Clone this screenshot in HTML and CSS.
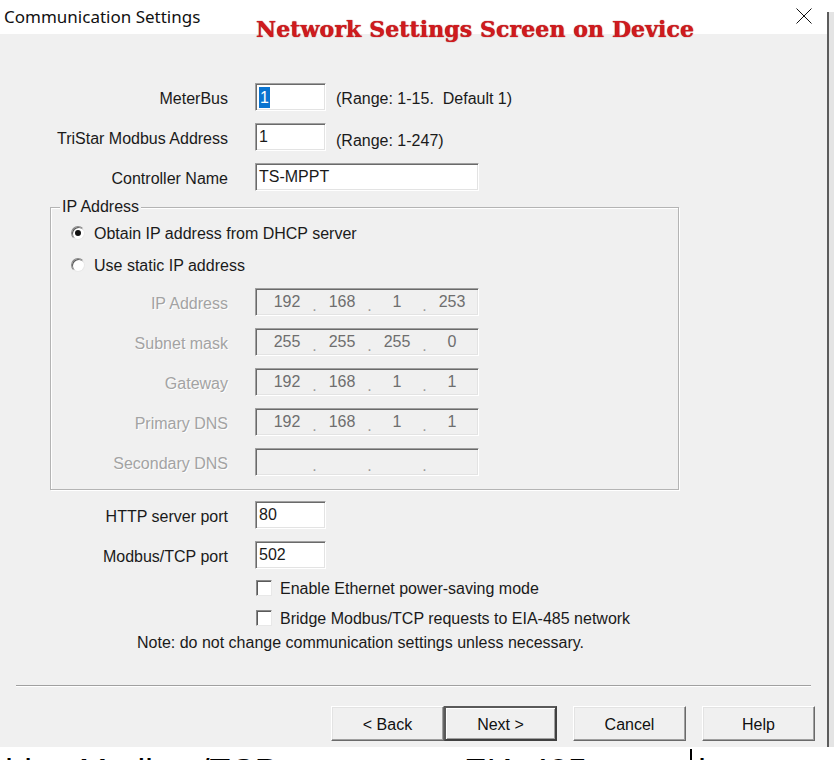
FILE: index.html
```html
<!DOCTYPE html>
<html lang="en">
<head>
  <meta charset="UTF-8" />
  <title>Communication Settings</title>
  <link rel="stylesheet" href="styles.css">
</head>
<body>
  <div class="screen">
    <div class="window">
      <div class="titlebar">
        <span class="title">Communication Settings</span>
        <svg class="close" width="16" height="16" viewBox="0 0 16 16">
          <path d="M0.5 0.5 L15.5 15.5 M15.5 0.5 L0.5 15.5" stroke="#111" stroke-width="1" fill="none" />
        </svg>
      </div>
      <div class="note-overlay">Network Settings Screen on Device</div>

      <div class="content">
        <div class="row">
          <span class="lbl">MeterBus</span>
          <div class="field short"><span class="selected">1</span></div>
          <span class="hint">(Range: 1-15.&nbsp; Default 1)</span>
        </div>
        <div class="row">
          <span class="lbl">TriStar Modbus Address</span>
          <div class="field short">1</div>
          <span class="hint low">(Range: 1-247)</span>
        </div>
        <div class="row">
          <span class="lbl">Controller Name</span>
          <div class="field long">TS-MPPT</div>
        </div>

        <div class="group">
          <span class="legend">IP Address</span>
          <div class="radio-row">
            <span class="radio checked"></span>
            <span>Obtain IP address from DHCP server</span>
          </div>
          <div class="radio-row">
            <span class="radio"></span>
            <span>Use static IP address</span>
          </div>

          <div class="row ip-row first">
            <span class="lbl disabled">IP Address</span>
            <div class="field long ip">
              <span class="oct">192</span><span class="dot">.</span><span class="oct">168</span><span class="dot">.</span><span class="oct">1</span><span class="dot">.</span><span class="oct">253</span>
            </div>
          </div>
          <div class="row ip-row">
            <span class="lbl disabled">Subnet mask</span>
            <div class="field long ip">
              <span class="oct">255</span><span class="dot">.</span><span class="oct">255</span><span class="dot">.</span><span class="oct">255</span><span class="dot">.</span><span class="oct">0</span>
            </div>
          </div>
          <div class="row ip-row">
            <span class="lbl disabled">Gateway</span>
            <div class="field long ip">
              <span class="oct">192</span><span class="dot">.</span><span class="oct">168</span><span class="dot">.</span><span class="oct">1</span><span class="dot">.</span><span class="oct">1</span>
            </div>
          </div>
          <div class="row ip-row">
            <span class="lbl disabled">Primary DNS</span>
            <div class="field long ip">
              <span class="oct">192</span><span class="dot">.</span><span class="oct">168</span><span class="dot">.</span><span class="oct">1</span><span class="dot">.</span><span class="oct">1</span>
            </div>
          </div>
          <div class="row ip-row">
            <span class="lbl disabled">Secondary DNS</span>
            <div class="field long ip">
              <span class="oct"></span><span class="dot">.</span><span class="oct"></span><span class="dot">.</span><span class="oct"></span><span class="dot">.</span><span class="oct"></span>
            </div>
          </div>
        </div>

        <div class="row port-row">
          <span class="lbl">HTTP server port</span>
          <div class="field short">80</div>
        </div>
        <div class="row">
          <span class="lbl">Modbus/TCP port</span>
          <div class="field short">502</div>
        </div>

        <div class="check-row first">
          <span class="checkbox"></span>
          <span>Enable Ethernet power-saving mode</span>
        </div>
        <div class="check-row">
          <span class="checkbox"></span>
          <span>Bridge Modbus/TCP requests to EIA-485 network</span>
        </div>
        <p class="note">Note: do not change communication settings unless necessary.</p>

        <div class="separator"></div>

        <div class="buttons">
          <button class="btn">&lt; Back</button>
          <button class="btn default">Next &gt;</button>
          <button class="btn gap">Cancel</button>
          <button class="btn gap">Help</button>
        </div>
      </div>
    </div>
    <div class="edge"></div>
  </div>
  <div class="behind">
    <span class="behind-text">ridge Modbus/TCP requests to EIA-485 network</span>
    <span class="behind-rule"></span>
  </div>
</body>
</html>
```

FILE: styles.css
```css
* {
  box-sizing: border-box;
}

body {
  margin: 0;
  background: #fff;
  font-family: 'Liberation Sans', Arial, sans-serif;
  font-size: 16px;
  color: #1a1a1a;
  width: 834px;
  height: 760px;
  overflow: hidden;
}

.screen {
  display: flex;
  height: 747px;
}

.window {
  position: relative;
  width: 827px;
  background: #f0f0f0;
}

.edge {
  flex: 1;
  background: #e4e4e4;
  border-left: 2px solid #5c5c5c;
  margin-top: 12px;
}

.titlebar {
  height: 34px;
  background: #fff;
  display: flex;
  align-items: center;
  justify-content: space-between;
  padding: 0 15px 0 4px;
}

.title {
  font-family: 'Noto Sans', 'Open Sans', sans-serif;
  font-size: 17px;
  color: #111;
  margin-top: -2px;
}

.close {
  margin-top: -2px;
}

.note-overlay {
  position: absolute;
  left: 256px;
  top: 16px;
  font-family: 'DejaVu Serif', 'Liberation Serif', serif;
  font-weight: bold;
  font-size: 22px;
  letter-spacing: 0.1px;
  color: #d01a1e;
  text-shadow: 0 0 1px #8a0a0a;
}

.content {
  padding-top: 49px;
}

.row {
  display: flex;
  align-items: center;
  height: 28px;
  margin-top: 12px;
}

.content > .row:first-child {
  margin-top: 0;
}

.lbl {
  width: 228px;
  margin-right: 27px;
  padding-top: 3px;
  text-align: right;
  white-space: nowrap;
}

.lbl.disabled {
  width: 177px;
  color: #a3a3a3;
  text-shadow: 1px 1px 0 #fff;
}

.field {
  height: 28px;
  background: #fff;
  border: 1px solid;
  border-color: #a0a0a0 #fff #fff #a0a0a0;
  box-shadow: inset 1px 1px 0 #6a6a6a, inset -1px -1px 0 #e3e3e3;
  padding: 3px 0 0 3px;
  line-height: 20px;
}

.field.short {
  width: 71px;
}

.field.long {
  width: 224px;
}

.selected {
  display: inline-block;
  background: #0a74d0;
  color: #fff;
  padding: 0 1px 0 1px;
  line-height: 21px;
}

.hint {
  margin-left: 10px;
  padding-top: 3px;
}

.hint.low {
  padding-top: 8px;
}

.group {
  position: relative;
  margin: 16px 0 0 50px;
  width: 629px;
  height: 283px;
  border: 1px solid #b4b4b4;
  box-shadow: 1px 1px 0 #fff, inset 1px 1px 0 #fff;
  padding: 15px 0 0 0;
}

.legend {
  position: absolute;
  left: 9px;
  top: -11px;
  padding: 0 2px;
  background: #f0f0f0;
  line-height: 20px;
}

.radio-row {
  display: flex;
  align-items: center;
  height: 20px;
  padding-left: 20px;
  gap: 9px;
}

.radio-row span:last-child {
  padding-top: 2px;
}

.radio-row + .radio-row {
  margin-top: 12px;
}

.radio {
  width: 14px;
  height: 14px;
  border-radius: 50%;
  background: #fff;
  border: 1px solid;
  border-color: #8a8a8a #e8e8e8 #e8e8e8 #8a8a8a;
  box-shadow: inset 1px 1px 0 #5a5a5a;
  position: relative;
}

.radio.checked::after {
  content: "";
  position: absolute;
  left: 3px;
  top: 3px;
  width: 6px;
  height: 6px;
  border-radius: 50%;
  background: #111;
}

.ip-row.first {
  margin-top: 13px;
}

.field.ip {
  background: #f0f0f0;
  display: flex;
  align-items: flex-start;
  padding: 3px 0 0 9px;
  color: #6e6e6e;
}

.oct {
  width: 44px;
  text-align: center;
}

.dot {
  width: 11px;
  text-align: center;
  padding-top: 4px;
  color: #9a9a9a;
}

.port-row {
  margin-top: 11px;
}

.check-row {
  display: flex;
  align-items: center;
  height: 20px;
  padding-left: 256px;
  gap: 8px;
  margin-top: 10px;
}

.check-row span:last-child {
  padding-top: 2px;
}

.check-row.first {
  margin-top: 9px;
}

.checkbox {
  width: 16px;
  height: 16px;
  background: #fff;
  border: 1px solid;
  border-color: #8a8a8a #e8e8e8 #e8e8e8 #8a8a8a;
  box-shadow: inset 1px 1px 0 #5a5a5a;
}

.note {
  margin: 3px 0 0 137px;
  padding-top: 2px;
  line-height: 20px;
}

.separator {
  margin: 32px 16px 0 16px;
  height: 2px;
  border-top: 1px solid #a0a0a0;
  border-bottom: 1px solid #fff;
}

.buttons {
  display: flex;
  margin: 19px 0 0 331px;
}

.btn {
  width: 113px;
  height: 35px;
  font-family: 'Liberation Sans', Arial, sans-serif;
  font-size: 16px;
  color: #111;
  background: #f0f0f0;
  border: 1px solid;
  border-color: #fff #6a6a6a #6a6a6a #fff;
  box-shadow: inset -1px -1px 0 #a0a0a0, inset 1px 1px 0 #e3e3e3;
  padding: 2px 0 0 0;
}

.btn.default {
  border: 2px solid;
  border-color: #5a5a5a #404040 #404040 #5a5a5a;
  box-shadow: inset 1px 1px 0 #fff, inset -1px -1px 0 #a0a0a0;
}

.btn.gap {
  margin-left: 16px;
}

.behind {
  position: relative;
  height: 13px;
  overflow: hidden;
  background: #fff;
}

.behind-text {
  display: block;
  margin: 6px 0 0 -6px;
  font-family: 'Liberation Sans', Arial, sans-serif;
  font-size: 34px;
  line-height: 34px;
  color: #000;
  white-space: nowrap;
}

.behind-rule {
  position: absolute;
  left: 690px;
  top: 2px;
  width: 2px;
  height: 11px;
  background: #000;
}
```
